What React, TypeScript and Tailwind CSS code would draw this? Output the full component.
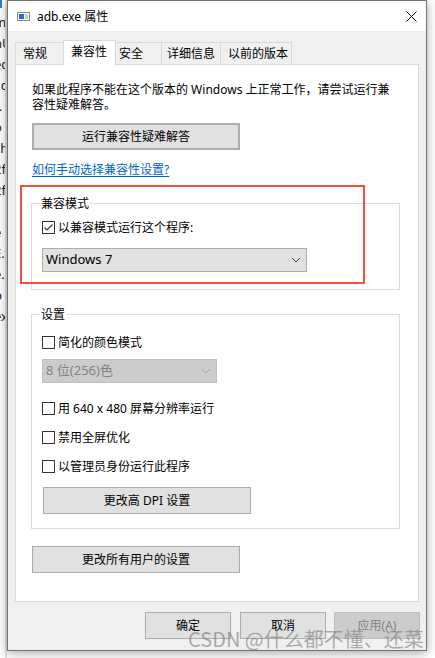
import React from 'react';

const font = "font-['Noto_Sans','Noto_Sans_CJK_SC',sans-serif]";

const bgLines = ['mA', 'nU', 'ed', 'l.c', 't.', 'o', 'ch', '2f', '2f', 'c', 'e', 'E.t', 'e.', 'p', 'ex'];

const tabs = [
    { label: '常规', w: 'w-[49px]', pl: 'pl-[7px]', active: false },
    { label: '兼容性', w: 'w-[53px]', pl: 'pl-[7px]', active: true },
    { label: '安全', w: 'w-[47px]', pl: 'pl-[3px]', active: false },
    { label: '详细信息', w: 'w-[60px]', pl: 'pl-[5px]', active: false },
    { label: '以前的版本', w: 'w-[72px]', pl: 'pl-[7px]', active: false },
];

const Chevron = ({ color }: { color: string }) => (
    <svg width="10" height="6" viewBox="0 0 10 6">
        <polyline points="1,1 5,5 9,1" fill="none" stroke={color} strokeWidth="1" />
    </svg>
);

const CheckBox = ({ label, checked = false }: { label: string; checked?: boolean }) => (
    <div className="flex items-center h-[13px]">
        <span className="w-[13px] h-[13px] shrink-0 border border-[#333333] bg-white flex items-center justify-center">
            {checked && (
                <svg width="11" height="11" viewBox="0 0 11 11">
                    <polyline points="1.5,5.5 4,8 9.5,2.5" fill="none" stroke="#333333" strokeWidth="1.2" />
                </svg>
            )}
        </span>
        <span className="ml-[3px] leading-[15px] whitespace-nowrap">{label}</span>
    </div>
);

const Button = ({ label, className = '', disabled = false }: { label: string; className?: string; disabled?: boolean }) => (
    <div
        className={
            'h-[27px] flex items-center justify-center border whitespace-nowrap ' +
            (disabled ? 'bg-[#cccccc] border-[#bfbfbf] text-[#838383] ' : 'bg-[#e1e1e1] border-[#adadad] ') +
            className
        }
    >
        {label}
    </div>
);

const Group = ({ title, className = '', children }: { title: string; className?: string; children: React.ReactNode }) => (
    <div className={'relative border border-[#dcdcdc] w-[369px] pl-[10px] ' + className}>
        <span className="absolute left-[8px] top-[-8px] bg-white px-[1px] leading-[15px]">{title}</span>
        {children}
    </div>
);

export default function App() {
    return (
        <div className={`w-[435px] h-[658px] bg-white flex overflow-hidden relative text-[12px] text-black ${font}`}>
            <div className="w-[7px] shrink-0 relative">
                <div className="absolute left-0 top-0 w-[2px] h-[8px] bg-[#2b7cd3]" />
                <div className="flex flex-col pt-[12px] leading-[21px] text-[13px] text-[#222] -ml-[6px] w-[12px] overflow-hidden">
                    {bgLines.map((t, i) => (
                        <span key={i} className="whitespace-nowrap">{t}</span>
                    ))}
                </div>
                <div className="absolute right-0 top-0 w-[2px] h-full bg-[#e2e2e2]" />
            </div>

            <div className="w-[420px] h-[651px] shrink-0 border border-[#707070] bg-[#f0f0f0] flex flex-col shadow-[0_2px_10px_rgba(0,0,0,0.35)] relative">
                <div className="h-[30px] bg-white flex items-center pl-[9px] pr-[9px]">
                    <svg width="13" height="9" viewBox="0 0 13 9">
                        <rect x="0.5" y="0.5" width="12" height="8" fill="#ffffff" stroke="#8a8a8a" />
                        <rect x="2" y="2" width="5" height="5" fill="#1e73d2" />
                        <rect x="8" y="2" width="3" height="5" fill="#c9c9c9" />
                    </svg>
                    <span className="ml-[7px] text-[12px] leading-[15px]">adb.exe 属性</span>
                    <svg className="ml-auto" width="11" height="11" viewBox="0 0 11 11">
                        <path d="M0.5 0.5 L10.5 10.5 M10.5 0.5 L0.5 10.5" stroke="#111" strokeWidth="1" />
                    </svg>
                </div>

                <div className="flex-1 flex flex-col px-[7px] pt-[9px]">
                    <div className="flex items-end h-[24px]">
                        {tabs.map((t, i) => (
                            <div
                                key={t.label}
                                className={
                                    'border border-b-0 border-[#d9d9d9] flex items-center whitespace-nowrap ' +
                                    t.w + ' ' + t.pl + ' ' +
                                    (i > 0 ? '-ml-px ' : '') +
                                    (t.active ? 'h-[25px] bg-white relative z-10 -mb-px pb-[2px]' : 'h-[22px] bg-[#f0f0f0]')
                                }
                            >
                                {t.label}
                            </div>
                        ))}
                    </div>

                    <div className="w-[404px] h-[538px] bg-white border border-[#d9d9d9] pl-[15px] flex flex-col">
                        <p className="mt-[17px] ml-px leading-[15px] whitespace-nowrap">
                            如果此程序不能在这个版本的 Windows 上正常工作，请尝试运行兼
                            <br />
                            容性疑难解答。
                        </p>
                        <Button label="运行兼容性疑难解答" className="mt-[11px] ml-px w-[208px] border-2 border-[#0078d7]" />
                        <a className="mt-[12px] ml-px leading-[15px] text-[#0066cc] underline underline-offset-2 self-start">
                            如何手动选择兼容性设置?
                        </a>

                        <Group title="兼容模式" className="mt-[26px] pt-[17px] pb-[17px]">
                            <CheckBox label="以兼容模式运行这个程序:" checked />
                            <div className="mt-[14px] w-[265px] h-[24px] bg-[#e1e1e1] border border-[#adadad] flex items-center justify-between pl-[3px] pr-[5px] text-[13px]">
                                <span>Windows 7</span>
                                <Chevron color="#444" />
                            </div>
                        </Group>

                        <Group title="设置" className="mt-[24px] pt-[21px] pb-[14px]">
                            <CheckBox label="简化的颜色模式" />
                            <div className="mt-[10px] w-[175px] h-[24px] bg-[#cccccc] border border-[#bfbfbf] flex items-center justify-between pl-[3px] pr-[5px] text-[13px] text-[#838383]">
                                <span>8 位(256)色</span>
                                <Chevron color="#a8a8a8" />
                            </div>
                            <div className="mt-[19px] flex flex-col gap-[16px]">
                                <CheckBox label="用 640 x 480 屏幕分辨率运行" />
                                <CheckBox label="禁用全屏优化" />
                                <CheckBox label="以管理员身份运行此程序" />
                            </div>
                            <Button label="更改高 DPI 设置" className="mt-[14px] ml-px w-[208px]" />
                        </Group>

                        <Button label="更改所有用户的设置" className="mt-[17px] ml-px w-[208px]" />
                    </div>

                    <div className="flex justify-end mt-[10px] gap-[9px]">
                        <Button label="确定" className="w-[86px]" />
                        <Button label="取消" className="w-[86px]" />
                        <Button label="应用(A)" className="w-[86px] -ml-px mr-[-1px]" disabled />
                    </div>
                </div>
            </div>

            <div className="absolute left-[20px] top-[185px] w-[345px] h-[99px] border-2 border-[#f2503c]" />

            <div className="absolute left-[188px] top-[629px] text-[20px] leading-[20px] text-[#7a7a7a99] whitespace-nowrap font-['Noto_Sans_CJK_SC',sans-serif]">
                CSDN @什么都不懂、还菜
            </div>
        </div>
    );
}
